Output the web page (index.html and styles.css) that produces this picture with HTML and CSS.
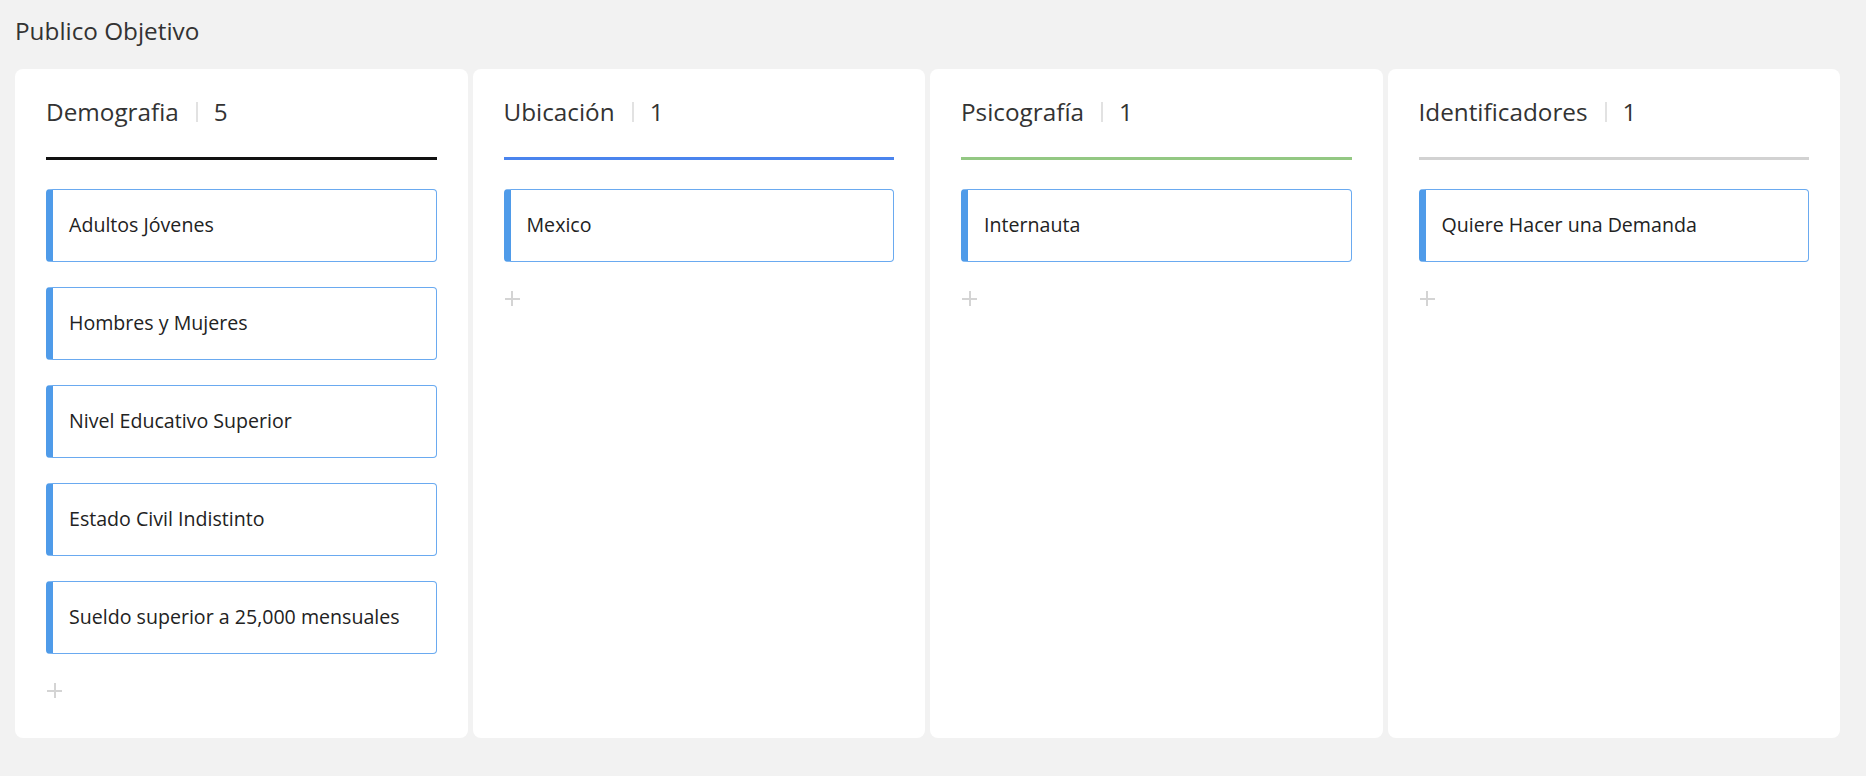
FILE: index.html
```html
<!DOCTYPE html>
<html lang="es">
<head>
<meta charset="utf-8">
<title>Publico Objetivo</title>
<link rel="stylesheet" href="styles.css">
</head>
<body>
<div class="page">
  <h1 class="page-title">Publico Objetivo</h1>
  <div class="board">
    <section class="column">
      <header class="col-head">
        <span class="col-name">Demografia</span>
        <span class="col-sep"></span>
        <span class="col-count">5</span>
      </header>
      <div class="col-rule rule-black"></div>
      <div class="items">
        <div class="item">Adultos Jóvenes</div>
        <div class="item">Hombres y Mujeres</div>
        <div class="item">Nivel Educativo Superior</div>
        <div class="item">Estado Civil Indistinto</div>
        <div class="item">Sueldo superior a 25,000 mensuales</div>
      </div>
      <button class="add" aria-label="Agregar"></button>
    </section>
    <section class="column">
      <header class="col-head">
        <span class="col-name">Ubicación</span>
        <span class="col-sep"></span>
        <span class="col-count">1</span>
      </header>
      <div class="col-rule rule-blue"></div>
      <div class="items">
        <div class="item">Mexico</div>
      </div>
      <button class="add" aria-label="Agregar"></button>
    </section>
    <section class="column">
      <header class="col-head">
        <span class="col-name">Psicografía</span>
        <span class="col-sep"></span>
        <span class="col-count">1</span>
      </header>
      <div class="col-rule rule-green"></div>
      <div class="items">
        <div class="item">Internauta</div>
      </div>
      <button class="add" aria-label="Agregar"></button>
    </section>
    <section class="column">
      <header class="col-head">
        <span class="col-name">Identificadores</span>
        <span class="col-sep"></span>
        <span class="col-count">1</span>
      </header>
      <div class="col-rule rule-gray"></div>
      <div class="items">
        <div class="item">Quiere Hacer una Demanda</div>
      </div>
      <button class="add" aria-label="Agregar"></button>
    </section>
  </div>
</div>
</body>
</html>
```

FILE: styles.css
```css
html, body {
  margin: 0;
  padding: 0;
  background: #f2f2f2;
}

body {
  font-family: "Open Sans", "Noto Sans", sans-serif;
  color: #222;
}

.page {
  padding: 14px 26px 38px 15px;
}

.page-title {
  margin: 0;
  font-size: 24.3px;
  font-weight: 400;
  line-height: 33px;
  color: #333;
}

.board {
  margin-top: 22px;
  display: grid;
  grid-template-columns: repeat(4, 1fr);
  gap: 5px;
}

.column {
  background: #fff;
  border-radius: 8px;
  height: 669px;
  box-sizing: border-box;
  padding: 26px 31px 0 31px;
  display: flex;
  flex-direction: column;
}

.col-head {
  display: flex;
  align-items: center;
  height: 33px;
  font-size: 24.3px;
  color: #333;
}

.col-sep {
  width: 2px;
  height: 20px;
  background: #e2e2e2;
  margin: 0 16px 0 17px;
}

.col-rule {
  height: 3px;
  margin-top: 29px;
}
.rule-black { background: #111; }
.rule-blue { background: #4a84ee; }
.rule-green { background: #93c883; }
.rule-gray { background: #d2d2d2; }

.items {
  margin-top: 29px;
  display: flex;
  flex-direction: column;
  gap: 25px;
}

.item {
  height: 73px;
  box-sizing: border-box;
  border: 1px solid #6aaaf0;
  border-left: 7px solid #4f9be9;
  border-radius: 4px;
  padding: 0 16px 3px;
  display: flex;
  align-items: center;
  font-size: 19.6px;
  color: #222;
}

.add {
  margin-top: 28px;
  width: 17px;
  height: 17px;
  padding: 0;
  border: 0;
  background:
    linear-gradient(#d4d4d4, #d4d4d4) center / 15px 2px no-repeat,
    linear-gradient(#d4d4d4, #d4d4d4) center / 2px 15px no-repeat;
  cursor: pointer;
}
```
